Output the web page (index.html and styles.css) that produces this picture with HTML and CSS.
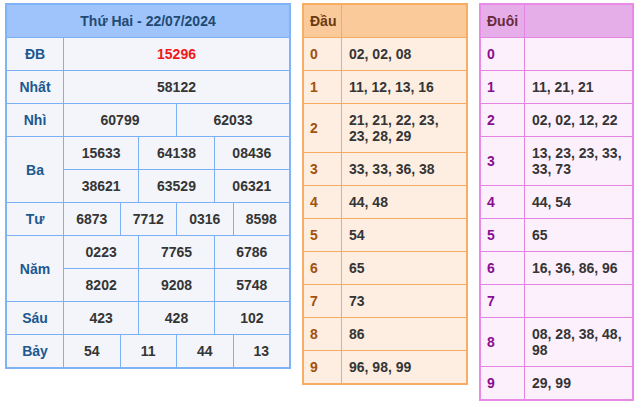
FILE: index.html
```html
<!DOCTYPE html>
<html lang="vi">
<head>
<meta charset="utf-8">
<title>Kết quả xổ số</title>
<link rel="stylesheet" href="styles.css">
</head>
<body>
<div class="page">
  <div class="kq">
    <div class="kq-head">Thứ Hai - 22/07/2024</div>

    <div class="lbl">ĐB</div>
    <div class="val s12 db">15296</div>

    <div class="lbl">Nhất</div>
    <div class="val s12">58122</div>

    <div class="lbl">Nhì</div>
    <div class="val s6">60799</div>
    <div class="val s6">62033</div>

    <div class="lbl r2">Ba</div>
    <div class="val s4">15633</div>
    <div class="val s4">64138</div>
    <div class="val s4">08436</div>
    <div class="val s4">38621</div>
    <div class="val s4">63529</div>
    <div class="val s4">06321</div>

    <div class="lbl">Tư</div>
    <div class="val s3">6873</div>
    <div class="val s3">7712</div>
    <div class="val s3">0316</div>
    <div class="val s3">8598</div>

    <div class="lbl r2">Năm</div>
    <div class="val s4">0223</div>
    <div class="val s4">7765</div>
    <div class="val s4">6786</div>
    <div class="val s4">8202</div>
    <div class="val s4">9208</div>
    <div class="val s4">5748</div>

    <div class="lbl">Sáu</div>
    <div class="val s4">423</div>
    <div class="val s4">428</div>
    <div class="val s4">102</div>

    <div class="lbl">Bảy</div>
    <div class="val s3">54</div>
    <div class="val s3">11</div>
    <div class="val s3">44</div>
    <div class="val s3">13</div>
  </div>

  <div class="lt dau">
    <div class="lt-head">Đầu</div><div class="lt-head"></div>
    <div class="k">0</div><div class="v">02, 02, 08</div>
    <div class="k">1</div><div class="v">11, 12, 13, 16</div>
    <div class="k">2</div><div class="v">21, 21, 22, 23, 23, 28, 29</div>
    <div class="k">3</div><div class="v">33, 33, 36, 38</div>
    <div class="k">4</div><div class="v">44, 48</div>
    <div class="k">5</div><div class="v">54</div>
    <div class="k">6</div><div class="v">65</div>
    <div class="k">7</div><div class="v">73</div>
    <div class="k">8</div><div class="v">86</div>
    <div class="k">9</div><div class="v">96, 98, 99</div>
  </div>

  <div class="lt duoi">
    <div class="lt-head">Đuôi</div><div class="lt-head"></div>
    <div class="k">0</div><div class="v"></div>
    <div class="k">1</div><div class="v">11, 21, 21</div>
    <div class="k">2</div><div class="v">02, 02, 12, 22</div>
    <div class="k">3</div><div class="v">13, 23, 23, 33, 33, 73</div>
    <div class="k">4</div><div class="v">44, 54</div>
    <div class="k">5</div><div class="v">65</div>
    <div class="k">6</div><div class="v">16, 36, 86, 96</div>
    <div class="k">7</div><div class="v"></div>
    <div class="k">8</div><div class="v">08, 28, 38, 48, 98</div>
    <div class="k">9</div><div class="v">29, 99</div>
  </div>
</div>
</body>
</html>
```

FILE: styles.css
```css
* { box-sizing: border-box; }
html, body { margin: 0; padding: 0; background: #ffffff; }
body {
  font-family: "Liberation Sans", Arial, sans-serif;
  font-size: 14px;
  font-weight: bold;
  line-height: 16px;
  color: #353535;
}
.page {
  display: flex;
  align-items: flex-start;
  gap: 11px;
  padding: 3px 0 0 5px;
}

/* results table */
.kq {
  width: 286px;
  display: grid;
  grid-template-columns: 56px repeat(12, 1fr);
  grid-auto-rows: 32px;
  gap: 1px;
  background: #7cb0f6;
  border: 2px solid #80b2f7;
}
.kq > div {
  background: #f3f5fa;
  display: flex;
  align-items: center;
  justify-content: center;
}
.kq .kq-head {
  grid-column: 1 / -1;
  background: #9ec4fb;
  color: #1f4a72;
}
.kq .lbl { color: #1c5890; }
.kq .r2 { grid-row: span 2; }
.s12 { grid-column: span 12; }
.s6 { grid-column: span 6; }
.s4 { grid-column: span 4; }
.s3 { grid-column: span 3; }
.kq .db { color: #f2171b; }

/* loto tables */
.lt {
  display: grid;
  gap: 1px;
}
.lt > div {
  padding: 8px 6px 8px 6px;
  min-height: 32px;
}
.lt .v { padding-left: 7px; padding-right: 8px; }
.lt .k { display: flex; align-items: center; }
.lt .v { display: flex; align-items: center; }
.lt .lt-head { display: flex; align-items: center; }

.dau {
  width: 166px;
  grid-template-columns: 37px 1fr;
  background: #f6ab61;
  border: 2px solid #f7ad64;
}
.dau > div { background: #fdeee1; }
.dau .lt-head { background: #fbca9b; color: #6a3a10; }
.dau .k { color: #a2520c; }

.duoi {
  width: 155px;
  grid-template-columns: 43px 1fr;
  background: #e585e3;
  border: 2px solid #e78be6;
}
.duoi > div { background: #fcf0fc; }
.duoi .lt-head { background: #e6aee8; color: #6a2a3a; }
.duoi .k { color: #8a0e90; }
```
